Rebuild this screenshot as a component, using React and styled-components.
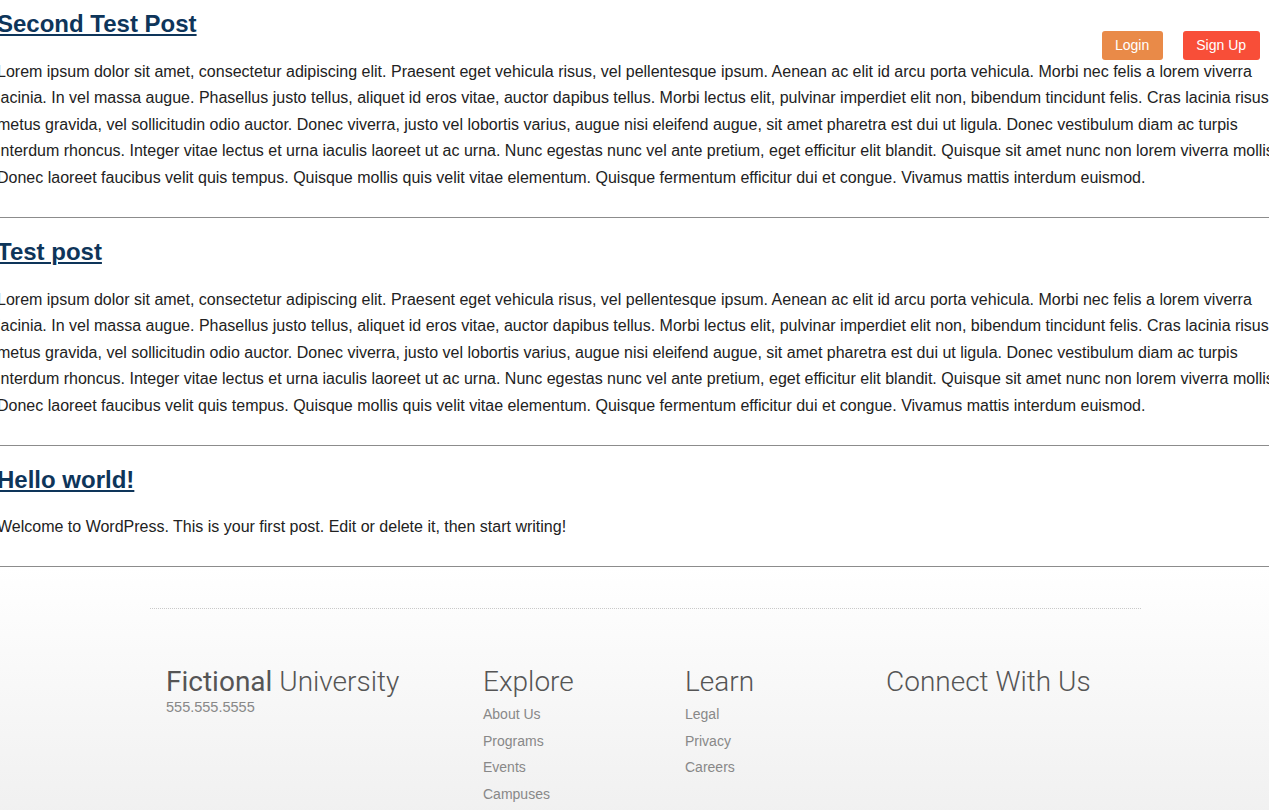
import React from "react";
import styled, { createGlobalStyle } from "styled-components";

const GlobalStyle = createGlobalStyle`
  html, body {
    margin: 0;
    padding: 0;
    overflow: hidden;
    background: #fff;
  }
  body {
    font-family: "Liberation Sans", Arial, Helvetica, sans-serif;
    color: #222;
  }
`;

const lorem =
  "Lorem ipsum dolor sit amet, consectetur adipiscing elit. Praesent eget vehicula risus, vel pellentesque ipsum. Aenean ac elit id arcu porta vehicula. Morbi nec felis a lorem viverra lacinia. In vel massa augue. Phasellus justo tellus, aliquet id eros vitae, auctor dapibus tellus. Morbi lectus elit, pulvinar imperdiet elit non, bibendum tincidunt felis. Cras lacinia risus metus gravida, vel sollicitudin odio auctor. Donec viverra, justo vel lobortis varius, augue nisi eleifend augue, sit amet pharetra est dui ut ligula. Donec vestibulum diam ac turpis interdum rhoncus. Integer vitae lectus et urna iaculis laoreet ut ac urna. Nunc egestas nunc vel ante pretium, eget efficitur elit blandit. Quisque sit amet nunc non lorem viverra mollis. Donec laoreet faucibus velit quis tempus. Quisque mollis quis velit vitae elementum. Quisque fermentum efficitur dui et congue. Vivamus mattis interdum euismod.";

const posts = [
  { title: "Second Test Post", body: lorem },
  { title: "Test post", body: lorem },
  {
    title: "Hello world!",
    body: "Welcome to WordPress. This is your first post. Edit or delete it, then start writing!",
  },
];

const explore = ["About Us", "Programs", "Events", "Campuses"];
const learn = ["Legal", "Privacy", "Careers"];

const App = () => {
  return (
    <>
      <GlobalStyle />
      <Page>
        <Header>
          <Button bg="#e98a48" href="#">Login</Button>
          <Button bg="#f84e38" href="#">Sign Up</Button>
        </Header>

        <Main>
          {posts.map((post, i) => (
            <Post key={post.title} first={i === 0}>
              <PostTitle>
                <a href="#">{post.title}</a>
              </PostTitle>
              <PostBody>{post.body}</PostBody>
            </Post>
          ))}
        </Main>

        <Footer>
          <FooterInner>
            <FooterGrid>
              <Column>
                <Brand>
                  <strong>Fictional</strong> University
                </Brand>
                <Phone>555.555.5555</Phone>
              </Column>
              <Column>
                <ColumnTitle>Explore</ColumnTitle>
                <LinkList>
                  {explore.map((item) => (
                    <li key={item}>
                      <FooterLink href="#">{item}</FooterLink>
                    </li>
                  ))}
                </LinkList>
              </Column>
              <Column>
                <ColumnTitle>Learn</ColumnTitle>
                <LinkList>
                  {learn.map((item) => (
                    <li key={item}>
                      <FooterLink href="#">{item}</FooterLink>
                    </li>
                  ))}
                </LinkList>
              </Column>
              <Column>
                <ColumnTitle>Connect With Us</ColumnTitle>
              </Column>
            </FooterGrid>
          </FooterInner>
        </Footer>
      </Page>
    </>
  );
};

const Page = styled.div`
  position: relative;
  width: 1297px;
  margin-left: -3px;
`;

const Header = styled.div`
  position: absolute;
  top: 31px;
  left: 1105px;
  display: flex;
  gap: 20px;
  z-index: 10;
`;

const Button = styled.a`
  display: block;
  height: 29px;
  line-height: 29px;
  padding: 0 14px 0 13px;
  background: ${(props) => props.bg};
  color: #fff;
  font-size: 14px;
  border-radius: 3px;
  text-decoration: none;
`;

const Main = styled.main`
  width: 1297px;
`;

const Post = styled.article`
  padding: ${(props) => (props.first ? "10px" : "20px")} 0 25.5px;
  border-bottom: 1px solid #8c8c8c;
`;

const PostTitle = styled.h2`
  margin: 0 0 20px;
  font-size: 24px;
  line-height: 1.2;
  font-weight: 700;

  a {
    color: #0e355a;
    text-decoration: underline;
    text-underline-offset: 2px;
    text-decoration-thickness: 2px;
  }
`;

const PostBody = styled.p`
  margin: 0;
  font-size: 16px;
  line-height: 26.5px;
  color: #222;
`;

const Footer = styled.footer`
  padding: 41px 0 80px;
  background: linear-gradient(to bottom, #fff 0%, #ececec 100%);
`;

const FooterInner = styled.div`
  width: 991px;
  margin: 0 auto;
  border-top: 1px dotted #c8c8c8;
  padding: 56px 0 0 16px;
  box-sizing: border-box;
`;

const FooterGrid = styled.div`
  display: grid;
  grid-template-columns: 317px 202px 201px 1fr;
`;

const Column = styled.div`
  display: flex;
  flex-direction: column;
`;

const Brand = styled.h3`
  margin: 0;
  font-family: Roboto, "Liberation Sans", sans-serif;
  font-size: 28px;
  line-height: 33px;
  font-weight: 300;
  color: #555;

  strong {
    font-weight: 400;
  }
`;

const ColumnTitle = styled.h3`
  margin: 0 0 3px;
  font-family: Roboto, "Liberation Sans", sans-serif;
  font-size: 28px;
  line-height: 33px;
  font-weight: 300;
  color: #555;
`;

const Phone = styled.p`
  margin: 0;
  font-size: 14.5px;
  line-height: 18px;
  font-weight: 400;
  color: #888;
`;

const LinkList = styled.ul`
  list-style: none;
  margin: 0;
  padding: 0;

  li {
    font-size: 14px;
    line-height: 26.4px;
  }
`;

const FooterLink = styled.a`
  color: #888;
  text-decoration: none;
`;

export default App;
